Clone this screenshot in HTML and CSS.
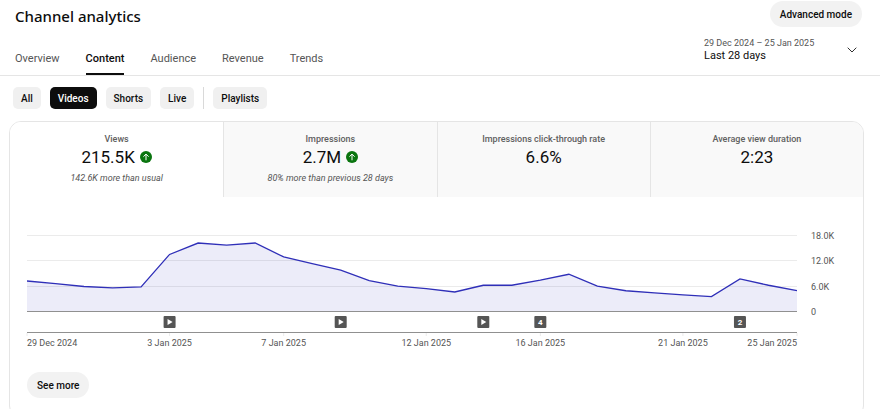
FILE: index.html
```html
<!DOCTYPE html>
<html lang="en">
<head>
	<meta charset="UTF-8">
	<meta name="viewport" content="width=device-width, initial-scale=1">
	<title>Channel analytics</title>
	<link rel="stylesheet" href="styles.css">
</head>
<body>
	<!-- Header -->
	<header class="page-header">
		<div class="header-main">
			<h1>Channel analytics</h1>
			<nav class="tabs">
				<a href="#overview">Overview</a>
				<a href="#content" class="active" aria-current="page">Content</a>
				<a href="#audience">Audience</a>
				<a href="#revenue">Revenue</a>
				<a href="#trends">Trends</a>
			</nav>
		</div>
		<div class="header-side">
			<button type="button" class="pill-btn">Advanced mode</button>
			<button type="button" class="date-picker" aria-haspopup="listbox">
				<span class="date-text">
					<span class="date-range">29 Dec 2024 – 25 Jan 2025</span>
					<span class="date-name">Last 28 days</span>
				</span>
				<svg class="chevron" width="10" height="6" viewBox="0 0 10 6" aria-hidden="true"><path d="M.7.7 5 5 9.3.7"/></svg>
			</button>
		</div>
	</header>

	<!-- Content type filter -->
	<div class="chips">
		<button type="button">All</button>
		<button type="button" class="selected" aria-pressed="true">Videos</button>
		<button type="button">Shorts</button>
		<button type="button">Live</button>
		<span class="divider"></span>
		<button type="button">Playlists</button>
	</div>

	<!-- Key metrics card -->
	<main class="card">
		<div class="metrics">
			<button type="button" class="metric selected">
				<span class="label">Views</span>
				<span class="value">215.5K
					<svg class="trend" viewBox="0 0 12 12" aria-hidden="true"><circle cx="6" cy="6" r="6"/><path d="M6 9.3V3.2M3.4 5.7 6 3.1l2.6 2.6"/></svg>
				</span>
				<span class="note">142.6K more than usual</span>
			</button>
			<button type="button" class="metric">
				<span class="label">Impressions</span>
				<span class="value">2.7M
					<svg class="trend" viewBox="0 0 12 12" aria-hidden="true"><circle cx="6" cy="6" r="6"/><path d="M6 9.3V3.2M3.4 5.7 6 3.1l2.6 2.6"/></svg>
				</span>
				<span class="note">80% more than previous 28 days</span>
			</button>
			<button type="button" class="metric">
				<span class="label">Impressions click-through rate</span>
				<span class="value">6.6%</span>
			</button>
			<button type="button" class="metric">
				<span class="label">Average view duration</span>
				<span class="value">2:23</span>
			</button>
		</div>
		<div class="chart">
			<svg id="views-chart" width="100%" height="128" role="img" aria-label="Views per day"></svg>
		</div>
		<button type="button" class="pill-btn see-more">See more</button>
	</main>
<script src="chart.js"></script>
</body>
</html>
```

FILE: styles.css
```css
* {
	box-sizing: border-box;
}
body {
	margin: 0;
	font-family: Roboto, "Liberation Sans", sans-serif;
	font-size: 10px;
	color: #0d0d0d;
	background: #fff;
}
button {
	font: inherit;
	color: inherit;
	border: 0;
	padding: 0;
	background: none;
	cursor: pointer;
}
.page-header {
	display: flex;
	justify-content: space-between;
	height: 76px;
	padding: 0 18px 0 15px;
	border-bottom: 1px solid #e5e5e5;
}
.header-main {
	display: flex;
	flex-direction: column;
	justify-content: space-between;
}
h1 {
	margin: 4px 0 0;
	font-family: "Noto Sans", "Open Sans", sans-serif;
	font-size: 15px;
	line-height: 24px;
	font-weight: 500;
}
.tabs {
	display: flex;
	gap: 26px;
}
.tabs a {
	height: 34px;
	font-size: 11px;
	line-height: 36px;
	color: #555;
	text-decoration: none;
}
.tabs a.active {
	color: #0d0d0d;
	font-weight: 500;
	border-bottom: 2px solid #0d0d0d;
}
.header-side {
	display: flex;
	flex-direction: column;
	align-items: flex-end;
	gap: 10px;
	padding-top: 1px;
}
.pill-btn {
	height: 26px;
	padding: 0 10px;
	border-radius: 13px;
	background: #f2f2f2;
	font-weight: 500;
}
.date-picker {
	display: flex;
	align-items: center;
	justify-content: space-between;
	width: 158px;
	padding-right: 5px;
	text-align: left;
}
.date-text {
	display: flex;
	flex-direction: column;
}
.date-range {
	font-size: 9px;
	line-height: 12px;
	color: #555;
}
.date-name {
	font-size: 11px;
	line-height: 14px;
}
.chevron {
	fill: none;
	stroke: #303030;
}
.chips {
	display: flex;
	gap: 9px;
	padding: 11px 13px 12px;
}
.chips button {
	height: 22px;
	padding: 0 8px;
	border-radius: 5px;
	background: #f0f0f0;
	font-weight: 500;
}
.chips button.selected {
	background: #0d0d0d;
	color: #fff;
}
.chips .divider {
	width: 1px;
	background: #d9d9d9;
}
.card {
	margin: 0 16px 0 9px;
	border: 1px solid #e5e5e5;
	border-radius: 12px;
	overflow: hidden;
}
.metrics {
	display: grid;
	grid-template-columns: repeat(4, 1fr);
}
.metric {
	display: flex;
	flex-direction: column;
	align-items: center;
	height: 75px;
	padding-top: 11px;
	background: #f9f9f9;
	border-left: 1px solid #e5e5e5;
}
.metric.selected {
	background: #fff;
}
.metric:first-child {
	border-left: 0;
}
.metric .label {
	font-size: 9px;
	line-height: 12px;
	font-weight: 500;
	color: #606060;
}
.metric .value {
	display: flex;
	align-items: center;
	gap: 5px;
	font-size: 17px;
	line-height: 24px;
}
.metric .note {
	margin-top: 3px;
	font-size: 9px;
	line-height: 12px;
	font-style: italic;
	color: #555;
}
.trend {
	width: 12px;
	height: 12px;
	fill: #0a750f;
}
.trend path {
	fill: none;
	stroke: #fff;
}
.chart {
	padding: 28px 66px 19px 17px;
}
.chart svg {
	display: block;
	overflow: visible;
}
.chart text {
	font-size: 9px;
	fill: #555;
}
.chart .grid-line {
	stroke: #ebebeb;
}
.chart .axis-line {
	stroke: #909090;
}
.chart .area {
	fill: #2a2abf;
	fill-opacity: .09;
}
.chart .line {
	fill: none;
	stroke: #2f2fb8;
	stroke-width: 1.3;
	vector-effect: non-scaling-stroke;
}
.chart .marker rect {
	fill: #555;
}
.chart .marker path {
	fill: #fff;
}
.chart .marker text {
	fill: #fff;
	font-size: 8px;
	font-weight: 700;
	text-anchor: middle;
}
.see-more {
	display: block;
	margin: 0 0 19px 17px;
}
```

FILE: chart.js
```js
var chart = document.getElementById('views-chart');
// daily views in thousands, 29 Dec 2024 - 25 Jan 2025
var views = [7.1, 6.5, 5.8, 5.5, 5.7, 13.4, 16.1, 15.6, 16.1, 12.8, 11.2, 9.7, 7.2, 5.9,
	5.3, 4.5, 6.1, 6.1, 7.3, 8.7, 5.9, 4.8, 4.3, 3.8, 3.4, 7.6, 6.1, 4.8];
var dates = {0: '29 Dec 2024', 5: '3 Jan 2025', 9: '7 Jan 2025', 14: '12 Jan 2025',
	18: '16 Jan 2025', 23: '21 Jan 2025', 27: '25 Jan 2025'};
// published videos per day
var published = {5: 1, 11: 1, 16: 1, 18: 4, 25: 2};
var last = views.length - 1;
var base = 86;
var scale = 76 / 18;

function xPos(i){
	return (i / last * 100) + '%';
}
function hLine(y, cls){
	return '<line class="' + cls + '" x1="0" x2="100%" y1="' + (y + 0.5) + '" y2="' + (y + 0.5) + '"/>';
}

var out = '';
['18.0K', '12.0K', '6.0K', '0'].forEach(function(label, i){
	var y = Math.round(10 + i * 76 / 3);
	if (i < 3) out += hLine(y, 'grid-line');
	out += '<text x="100%" dx="14" y="' + (y + 4) + '">' + label + '</text>';
});
var points = views.map(function(v, i){
	return i + ',' + (base - v * scale);
}).join(' ');
out += '<svg width="100%" height="' + base + '" viewBox="0 0 ' + last + ' ' + base + '" preserveAspectRatio="none">' +
	'<polygon class="area" points="0,' + base + ' ' + points + ' ' + last + ',' + base + '"/>' +
	'<polyline class="line" points="' + points + '"/></svg>';
out += hLine(base, 'axis-line') + hLine(107, 'axis-line');

Object.keys(dates).forEach(function(i){
	var anchor = i == 0 ? 'start' : (i == last ? 'end' : 'middle');
	out += '<line class="grid-line" x1="' + xPos(i) + '" x2="' + xPos(i) + '" y1="108" y2="111"/>';
	out += '<text x="' + xPos(i) + '" y="121" text-anchor="' + anchor + '">' + dates[i] + '</text>';
});
Object.keys(published).forEach(function(i){
	out += '<svg class="marker" x="' + xPos(i) + '" y="97">' +
		'<rect x="-6" y="-6" width="12" height="12" rx="1"/>' +
		(published[i] > 1 ? '<text y="3">' + published[i] + '</text>' : '<path d="M-2-3 3 0-2 3z"/>') +
		'</svg>';
});
chart.innerHTML = out;
```
